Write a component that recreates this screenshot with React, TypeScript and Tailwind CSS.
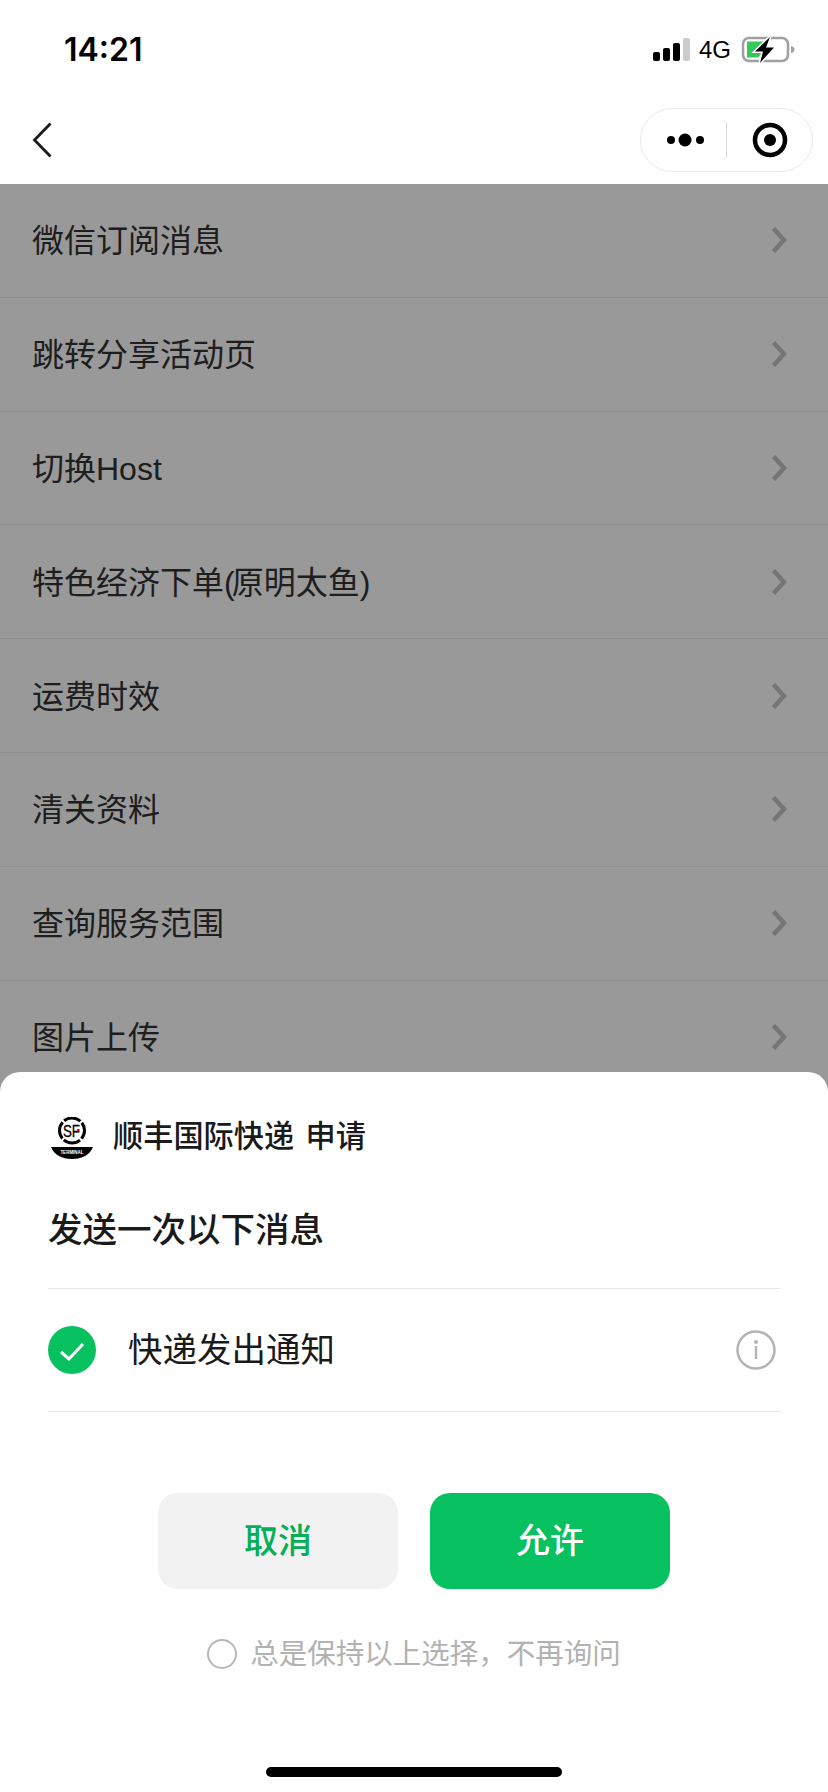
import React from "react";

const font = { fontFamily: '"Liberation Sans", "Noto Sans CJK SC", sans-serif' };
const narrowParen = "tracking-[-3px]";
const rows: React.ReactNode[] = [
  "微信订阅消息",
  "跳转分享活动页",
  "切换Host",
  <>
    特色经济下单<span className={narrowParen}>(</span>原明太鱼<span className={narrowParen}>)</span>
  </>,
  "运费时效",
  "清关资料",
  "查询服务范围",
  "图片上传",
];

function StatusIcons() {
  return (
    <div className="flex items-center">
      <svg width="38" height="26" viewBox="0 0 38 26" className="block">
        <rect x="0" y="15" width="7" height="9" rx="2" fill="#000" />
        <rect x="10" y="11" width="7" height="13" rx="2" fill="#000" />
        <rect x="20" y="6" width="7" height="18" rx="2" fill="#000" />
        <rect x="30" y="1" width="7" height="23" rx="2" fill="#cccccc" />
      </svg>
      <span className="ml-[8px] text-[24px] leading-[26px] text-black">4G</span>
      <svg width="54" height="30" viewBox="0 0 54 30" className="block ml-[10px]">
        <rect x="2" y="3" width="45" height="23" rx="6" fill="none" stroke="#a0a0a0" strokeWidth="2.5" />
        <path d="M6 6.500h18l-4 9h3l-6 7H6z" fill="#34c759" />
        <path d="M50 11c2.500.5 3.500 2 3.500 3.500S52.500 17.500 50 18z" fill="#a0a0a0" />
        <path d="M29 2 L14 16.500 H22 L19 28 L33 12.500 H25 Z" fill="#000" stroke="#fff" strokeWidth="3" className="[paint-order:stroke]" />
      </svg>
    </div>
  );
}

function Capsule() {
  return (
    <div className="flex h-[64px] w-[173px] items-center rounded-full border border-[#e8e8e8] bg-white">
      <div className="flex flex-1 items-center justify-center">
        <svg width="44" height="14" viewBox="0 0 44 14">
          <circle cx="9" cy="7" r="4" fill="#000" />
          <circle cx="23" cy="7" r="6.500" fill="#000" />
          <circle cx="38" cy="7" r="4" fill="#000" />
        </svg>
      </div>
      <div className="h-[36px] w-px bg-[#d9d9d9]" />
      <div className="flex w-[85px] items-center justify-center">
        <svg width="36" height="36" viewBox="0 0 36 36">
          <circle cx="18" cy="18" r="15" fill="none" stroke="#000" strokeWidth="4.500" />
          <circle cx="18" cy="18" r="6" fill="#000" />
        </svg>
      </div>
    </div>
  );
}

function Logo() {
  return (
    <svg width="42" height="42" viewBox="0 0 42 42" className="block">
      <circle cx="21" cy="13.500" r="12.500" fill="none" stroke="#000" strokeWidth="3" strokeDasharray="17.625 2" strokeDashoffset="8.800" />
      <text x="12" y="19.500" textLength="17" lengthAdjust="spacingAndGlyphs" fontSize="16.500" fill="#000" stroke="#000" strokeWidth="0.300" style={font}>SF</text>
      <rect x="26" y="12" width="2.500" height="2.500" fill="#e60012" />
      <path d="M0 30h42c-3 8-11 12-21 12S3 38 0 30z" fill="#000" />
      <text x="21" y="36.500" textAnchor="middle" fontSize="4.500" fontWeight="700" fill="#fff" style={font}>TERMINAL</text>
    </svg>
  );
}

export default function App() {
  return (
    <div className="relative h-[1792px] w-[828px] overflow-hidden bg-white" style={font}>
      <div className="flex h-[88px] items-center justify-between pl-[64px] pr-[33px] pt-[12px]">
        <span className="text-[32px] font-semibold leading-none text-black" style={{ fontFamily: "Inter, sans-serif" }}>14:21</span>
        <StatusIcons />
      </div>
      <div className="flex h-[96px] items-center justify-between pl-[32px] pr-[15px] pt-[8px]">
        <svg width="20" height="36" viewBox="0 0 20 36" className="block">
          <path d="M18.500 1.500 L2.500 18 L18.500 34.500" fill="none" stroke="#1a1a1a" strokeWidth="2.800" />
        </svg>
        <Capsule />
      </div>
      <ul>
        {rows.map((r, i) => (
          <li key={i} className="flex h-[113.8px] items-center justify-between border-b border-[#eeeeee] pl-[32px] pr-[41px]">
            <span className="pt-[2px] text-[32px] leading-none text-[#333333]">{r}</span>
            <svg width="16" height="28" viewBox="0 0 16 28" className="block">
              <path d="M2.500 2.500 L13 14 L2.500 25.500" fill="none" stroke="#c3c3c3" strokeWidth="4.500" />
            </svg>
          </li>
        ))}
      </ul>
      <div className="absolute inset-x-0 bottom-0 top-[184px] bg-black/40" />
      <div className="absolute inset-x-0 bottom-0 flex h-[720px] flex-col rounded-t-[20px] bg-white px-[48px] pt-[45px]">
        <div className="flex h-[42px] items-center gap-[20px] pl-[3px]">
          <Logo />
          <span className="pb-[2px] text-[30.2px] font-medium leading-none text-[#1a1a1a] [word-spacing:3px]">顺丰国际快递 申请</span>
        </div>
        <div className="mt-[47px] text-[34.5px] font-medium leading-[48px] text-[#1a1a1a]">发送一次以下消息</div>
        <div className="mt-[34px] flex h-[124px] items-center border-y border-[#e6e6e6] pr-[4px]">
          <svg width="48" height="48" viewBox="0 0 48 48" className="block">
            <circle cx="24" cy="24" r="24" fill="#07c160" />
            <path d="M13 26 L21 33 L35 18" fill="none" stroke="#fff" strokeWidth="3" />
          </svg>
          <span className="ml-[32px] flex-1 text-[34.5px] leading-none text-[#1a1a1a]">快递发出通知</span>
          <svg width="40" height="40" viewBox="0 0 40 40" className="block">
            <circle cx="20" cy="20" r="18.500" fill="none" stroke="#b3b3b3" strokeWidth="2.500" />
            <circle cx="20" cy="12" r="2" fill="#b3b3b3" />
            <rect x="18.800" y="16" width="2.400" height="13" fill="#b3b3b3" />
          </svg>
        </div>
        <div className="mt-[81px] flex justify-center gap-[32px]">
          <button className="h-[96px] w-[240px] rounded-[20px] bg-[#f2f2f2] text-[34px] font-medium text-[#06ae56]">取消</button>
          <button className="h-[96px] w-[240px] rounded-[20px] bg-[#07c160] text-[34px] font-medium text-white">允许</button>
        </div>
        <div className="mt-[50px] flex h-[30px] items-center justify-center gap-[13px]">
          <span className="h-[30px] w-[30px] rounded-full border-2 border-[#b8b8b8]" />
          <span className="text-[28.5px] leading-none text-[#b2b2b2]">{"总是保持以上选择\uFF0C不再询问"}</span>
        </div>
        <div className="mx-auto mt-[98px] h-[10px] w-[296px] rounded-full bg-black" />
      </div>
    </div>
  );
}
